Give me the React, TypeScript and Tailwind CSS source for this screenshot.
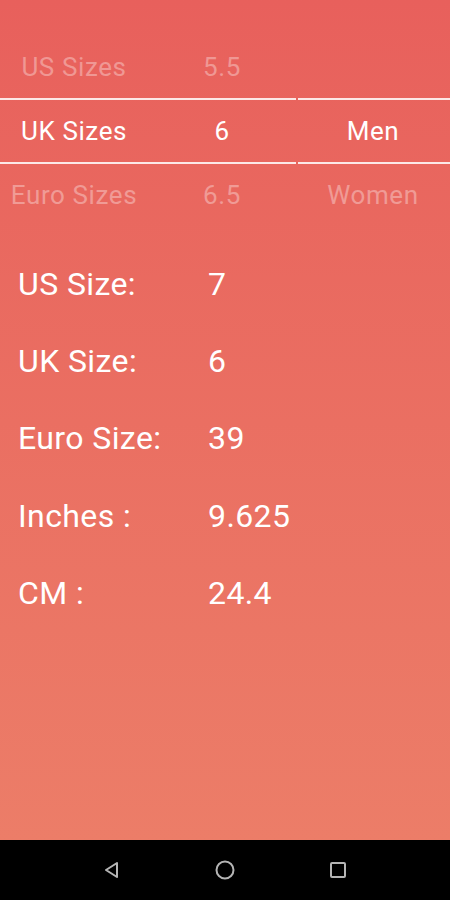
import React from 'react'

const pickerRows = [
  { label: 'US Sizes', size: '5.5', gender: '' },
  { label: 'UK Sizes', size: '6', gender: 'Men' },
  { label: 'Euro Sizes', size: '6.5', gender: 'Women' },
]

const details = [
  ['US Size:', '7'],
  ['UK Size:', '6'],
  ['Euro Size:', '39'],
  ['Inches :', '9.625'],
  ['CM :', '24.4'],
]

export default function App() {
  return (
    <div className="w-[450px] h-[900px] flex flex-col font-['Roboto',sans-serif] overflow-hidden">
      <div className="flex-1 bg-gradient-to-b from-[#e8605c] to-[#ec7d68] flex flex-col">
        {/* picker */}
        <div className="mt-[36px] flex flex-col">
          {pickerRows.map((r, i) => {
            const sel = i === 1
            return (
              <div key={r.label} className="flex flex-col">
                {sel && (
                  <div className="flex h-[2px]">
                    <div className="w-[296px] bg-white/85" />
                    <div className="w-[2px]" />
                    <div className="flex-1 bg-white/85" />
                  </div>
                )}
                <div
                  className={
                    'flex items-center h-[62px] text-[26px] tracking-[0.6px] ' +
                    (sel ? 'text-white' : 'text-white/35')
                  }
                >
                  <div className="w-[148px] text-center whitespace-nowrap">{r.label}</div>
                  <div className="w-[148px] text-center">{r.size}</div>
                  <div className="flex-1 text-center">{r.gender}</div>
                </div>
                {sel && (
                  <div className="flex h-[2px]">
                    <div className="w-[296px] bg-white/85" />
                    <div className="w-[2px]" />
                    <div className="flex-1 bg-white/85" />
                  </div>
                )}
              </div>
            )
          })}
        </div>

        {/* results */}
        <div className="mt-[19px] flex flex-col">
          {details.map(([k, v]) => (
            <div key={k} className="flex items-center h-[77.3px] text-[32px] tracking-[0.4px] text-white">
              <div className="w-[208px] pl-[18px]">{k}</div>
              <div>{v}</div>
            </div>
          ))}
        </div>
      </div>

      {/* nav bar */}
      <div className="h-[60px] bg-black flex items-center justify-center gap-[93px]">
        <svg width="20" height="20" viewBox="0 0 20 20" fill="none" stroke="#b5b5b5" strokeWidth="2" strokeLinejoin="round">
          <path d="M15 3 L4 10 L15 17 Z" />
        </svg>
        <svg width="20" height="20" viewBox="0 0 20 20" fill="none" stroke="#b5b5b5" strokeWidth="2">
          <circle cx="10" cy="10" r="8.5" />
        </svg>
        <svg width="20" height="20" viewBox="0 0 20 20" fill="none" stroke="#b5b5b5" strokeWidth="2">
          <rect x="3" y="3" width="14" height="14" rx="1" />
        </svg>
      </div>
    </div>
  )
}
